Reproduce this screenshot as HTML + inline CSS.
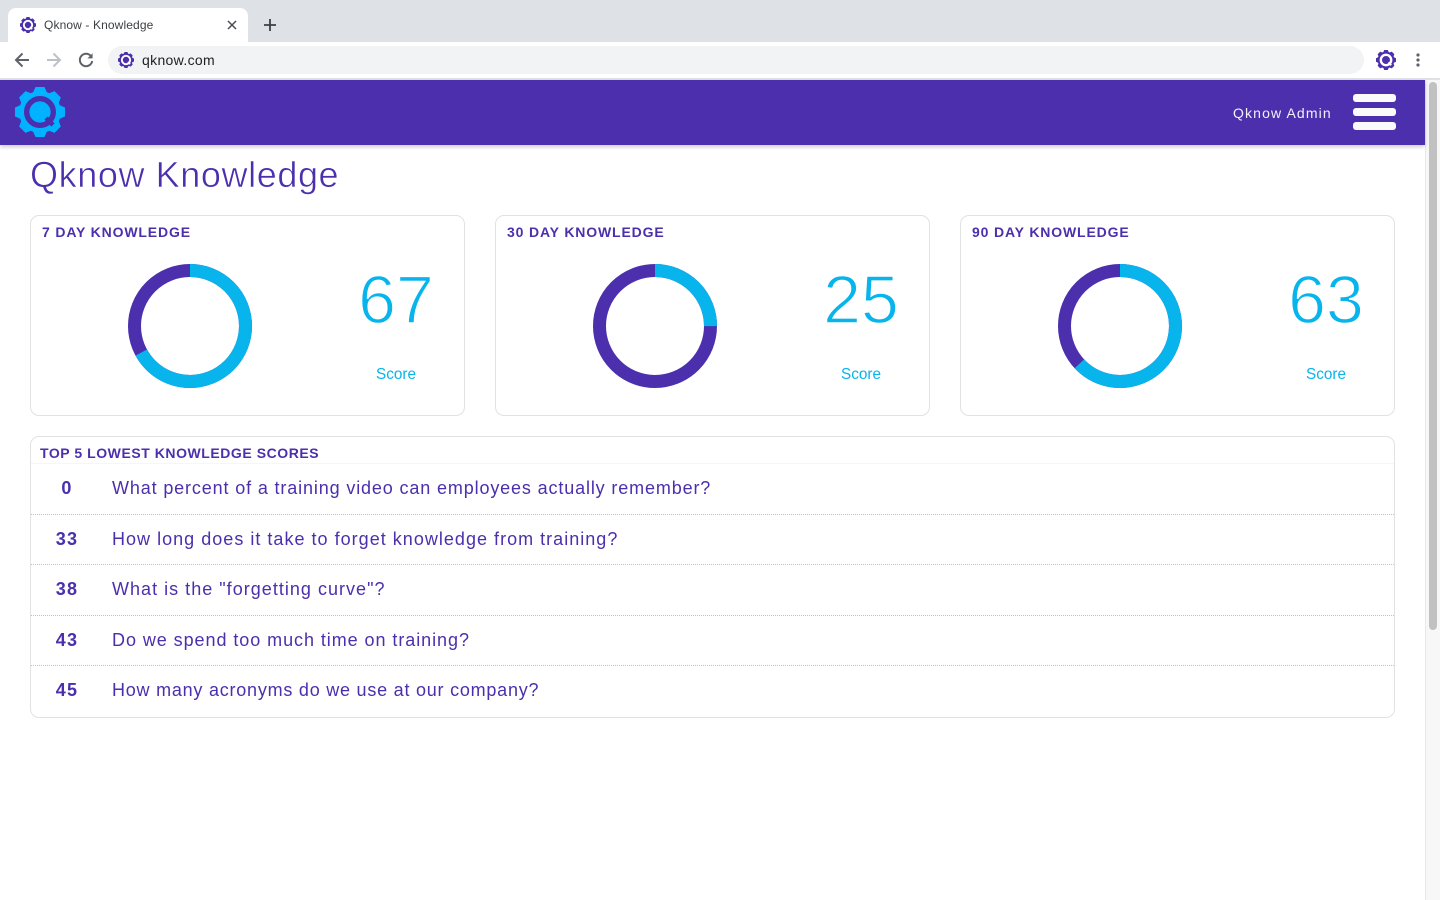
<!DOCTYPE html>
<html><head><meta charset="utf-8"><title>Qknow - Knowledge</title>
<style>
html,body{margin:0;padding:0;width:1440px;height:900px;overflow:hidden;background:#fff;font-family:"Liberation Sans",sans-serif}
.a{position:absolute;white-space:nowrap}
.card{position:absolute;top:215px;width:433px;height:199px;border:1px solid #e2e2e2;border-radius:9px;background:#fff}
.h{position:absolute;font-weight:700;font-size:14px;color:#4b2fad;letter-spacing:.85px;line-height:16px;white-space:nowrap}
.num{position:absolute;top:262px;width:120px;text-align:center;font-size:68px;line-height:76px;color:#08b4ec;font-weight:400;-webkit-text-stroke:1.4px #fff}
.sc{position:absolute;top:366px;width:120px;text-align:center;font-size:15.3px;line-height:18px;color:#08b4ec}
.sep{position:absolute;left:31px;width:1363px;height:0;border-top:1px dotted #c0c0c0}
.n{position:absolute;left:37px;width:60px;text-align:center;font-weight:700;font-size:18px;line-height:22px;color:#4b2fad;letter-spacing:1.2px}
.q{position:absolute;left:112px;font-size:18px;line-height:22px;color:#4b2fad;white-space:nowrap}
</style></head><body>
<svg width="0" height="0" style="position:absolute"><defs>
<g id="gear"><circle cx="25" cy="25" r="21" fill="currentColor"/>
<g fill="currentColor"><path d="M20.5 0H29.5L33 8H17Z"/><path d="M20.5 0H29.5L33 8H17Z" transform="rotate(45 25 25)"/><path d="M20.5 0H29.5L33 8H17Z" transform="rotate(90 25 25)"/><path d="M20.5 0H29.5L33 8H17Z" transform="rotate(135 25 25)"/><path d="M20.5 0H29.5L33 8H17Z" transform="rotate(180 25 25)"/><path d="M20.5 0H29.5L33 8H17Z" transform="rotate(225 25 25)"/><path d="M20.5 0H29.5L33 8H17Z" transform="rotate(270 25 25)"/><path d="M20.5 0H29.5L33 8H17Z" transform="rotate(315 25 25)"/></g></g>
</defs></svg>

<!-- chrome -->
<div class="a" style="left:0;top:0;width:1440px;height:42px;background:#dee1e6"></div>
<div class="a" style="left:8px;top:8px;width:240px;height:34px;background:#fff;border-radius:8px 8px 0 0"></div>
<svg class="a" style="left:20px;top:17px;color:#4b2fad" width="16" height="16" viewBox="0 0 50 50"><use href="#gear"/><circle cx="25" cy="25" r="13" fill="none" stroke="#fff" stroke-width="6"/><path d="M31 31L38 38" stroke="#fff" stroke-width="5"/></svg>
<div class="a" style="left:44px;top:17px;font-size:12px;line-height:16px;color:#3c4043;letter-spacing:.12px">Qknow - Knowledge</div>
<svg class="a" style="left:226px;top:19px" width="12" height="12" viewBox="0 0 12 12"><path d="M2 2L10 10M10 2L2 10" stroke="#4a4d51" stroke-width="1.5" fill="none"/></svg>
<svg class="a" style="left:262px;top:17px" width="16" height="16" viewBox="0 0 16 16"><path d="M8 2V14M2 8H14" stroke="#3c4043" stroke-width="1.8" fill="none"/></svg>
<div class="a" style="left:0;top:42px;width:1440px;height:36px;background:#fff"></div>
<div class="a" style="left:0;top:78px;width:1440px;height:2px;background:#dfe1e5"></div>
<svg class="a" style="left:14px;top:52px" width="16" height="16" viewBox="0 0 16 16"><path d="M15 8H2.5M8.5 1.5L2 8L8.5 14.5" stroke="#5f6368" stroke-width="2" fill="none"/></svg>
<svg class="a" style="left:46px;top:52px" width="16" height="16" viewBox="0 0 16 16"><path d="M1 8H13.5M7.5 1.5L14 8L7.5 14.5" stroke="#bdc1c6" stroke-width="2" fill="none"/></svg>
<svg class="a" style="left:78px;top:52px" width="16" height="16" viewBox="0 0 16 16"><path d="M13 4.2A6.2 6.2 0 1 0 14.2 9" stroke="#5f6368" stroke-width="2" fill="none"/><path d="M14.6 1.2V6.4H9.4Z" fill="#5f6368"/></svg>
<div class="a" style="left:108px;top:46px;width:1256px;height:28px;border-radius:14px;background:#f1f3f4"></div>
<svg class="a" style="left:118px;top:52px;color:#4b2fad" width="16" height="16" viewBox="0 0 50 50"><use href="#gear"/><circle cx="25" cy="25" r="13" fill="none" stroke="#fff" stroke-width="6"/><path d="M31 31L38 38" stroke="#fff" stroke-width="5"/></svg>
<div class="a" style="left:142px;top:51px;font-size:14px;line-height:18px;color:#202124;letter-spacing:.33px">qknow.com</div>
<svg class="a" style="left:1376px;top:50px;color:#4b2fad" width="20" height="20" viewBox="0 0 50 50"><use href="#gear"/><circle cx="25" cy="25" r="13" fill="none" stroke="#fff" stroke-width="6"/><path d="M31 31L38 38" stroke="#fff" stroke-width="5"/></svg>
<svg class="a" style="left:1416px;top:53px" width="4" height="14" viewBox="0 0 4 14"><circle cx="2" cy="2" r="1.6" fill="#5f6368"/><circle cx="2" cy="7" r="1.6" fill="#5f6368"/><circle cx="2" cy="12" r="1.6" fill="#5f6368"/></svg>

<!-- scrollbar -->
<div class="a" style="left:1425px;top:80px;width:15px;height:820px;background:#f7f7f7;border-left:1px solid #e8e8e8;box-sizing:border-box"></div>
<div class="a" style="left:1429px;top:82px;width:8px;height:548px;border-radius:4px;background:#c1c1c1"></div>

<!-- header -->
<div class="a" style="left:0;top:80px;width:1425px;height:65px;background:#4b2fad;box-shadow:0 2px 4px rgba(0,0,0,.2)"></div>
<svg class="a" style="left:15px;top:87px;color:#00b2ff" width="50" height="50" viewBox="0 0 50 50"><use href="#gear"/><circle cx="25" cy="25" r="13.3" fill="#00b2ff" stroke="#4b2fad" stroke-width="5.4"/><path d="M31 31L38 38" stroke="#4b2fad" stroke-width="4.5"/></svg>
<div class="a" style="left:1233px;top:104px;font-size:14px;line-height:18px;color:#f3f0fb;letter-spacing:1.13px">Qknow Admin</div>
<div class="a" style="left:1353px;top:94px;width:43px;height:8px;background:#fafafa;border-radius:3px"></div>
<div class="a" style="left:1353px;top:108px;width:43px;height:8px;background:#fafafa;border-radius:3px"></div>
<div class="a" style="left:1353px;top:122px;width:43px;height:8px;background:#fafafa;border-radius:3px"></div>

<div class="a" style="left:30px;top:153px;font-size:36px;line-height:44px;color:#4b2fad;letter-spacing:.6px;-webkit-text-stroke:.55px #fff">Qknow Knowledge</div>

<!-- cards -->
<div class="card" style="left:30px"></div>
<div class="card" style="left:495px"></div>
<div class="card" style="left:960px"></div>
<div class="h" style="left:42px;top:224px">7 DAY KNOWLEDGE</div>
<div class="h" style="left:507px;top:224px">30 DAY KNOWLEDGE</div>
<div class="h" style="left:972px;top:224px">90 DAY KNOWLEDGE</div>

<svg class="a" style="left:128px;top:264px" width="124" height="124" viewBox="0 0 124 124"><circle cx="62" cy="62" r="55.5" fill="none" stroke="#4b2fad" stroke-width="13"/><circle cx="62" cy="62" r="55.5" fill="none" stroke="#08b4ec" stroke-width="13" stroke-dasharray="233.6 348.7" transform="rotate(-90 62 62)"/></svg>
<svg class="a" style="left:593px;top:264px" width="124" height="124" viewBox="0 0 124 124"><circle cx="62" cy="62" r="55.5" fill="none" stroke="#4b2fad" stroke-width="13"/><circle cx="62" cy="62" r="55.5" fill="none" stroke="#08b4ec" stroke-width="13" stroke-dasharray="87.2 348.7" transform="rotate(-90 62 62)"/></svg>
<svg class="a" style="left:1058px;top:264px" width="124" height="124" viewBox="0 0 124 124"><circle cx="62" cy="62" r="55.5" fill="none" stroke="#4b2fad" stroke-width="13"/><circle cx="62" cy="62" r="55.5" fill="none" stroke="#08b4ec" stroke-width="13" stroke-dasharray="219.7 348.7" transform="rotate(-90 62 62)"/></svg>

<div class="num" style="left:336px">67</div><div class="sc" style="left:336px">Score</div>
<div class="num" style="left:801px">25</div><div class="sc" style="left:801px">Score</div>
<div class="num" style="left:1266px">63</div><div class="sc" style="left:1266px">Score</div>

<!-- list -->
<div class="a" style="left:30px;top:436px;width:1363px;height:280px;border:1px solid #e2e2e2;border-radius:9px"></div>
<div class="a" style="left:31px;top:463px;width:1363px;height:1px;background:#f6f6f6"></div>
<div class="h" style="left:40px;top:445px;letter-spacing:.55px">TOP 5 LOWEST KNOWLEDGE SCORES</div>
<div class="n" style="top:477px">0</div><div class="q" style="top:477px;letter-spacing:.86px">What percent of a training video can employees actually remember?</div>
<div class="sep" style="top:514px"></div>
<div class="n" style="top:528px">33</div><div class="q" style="top:528px;letter-spacing:1.02px">How long does it take to forget knowledge from training?</div>
<div class="sep" style="top:564px"></div>
<div class="n" style="top:578px">38</div><div class="q" style="top:578px;letter-spacing:1.02px">What is the "forgetting curve"?</div>
<div class="sep" style="top:615px"></div>
<div class="n" style="top:629px">43</div><div class="q" style="top:629px;letter-spacing:.94px">Do we spend too much time on training?</div>
<div class="sep" style="top:665px"></div>
<div class="n" style="top:679px">45</div><div class="q" style="top:679px;letter-spacing:.77px">How many acronyms do we use at our company?</div>
</body></html>
